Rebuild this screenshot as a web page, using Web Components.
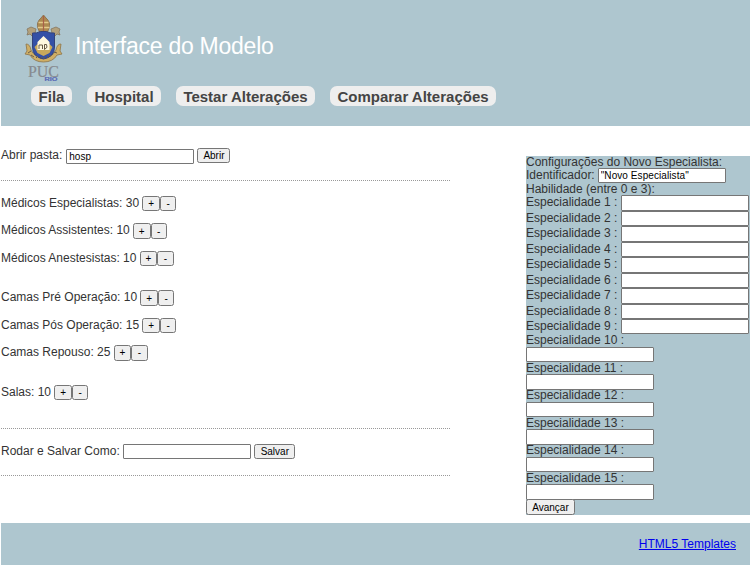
<!DOCTYPE html>
<html lang="pt-BR"><head><meta charset="utf-8"><title>Interface do Modelo</title>
<style>
html,body{margin:0;background:#fff}
body{width:750px;height:567px;overflow:hidden;font:12px/12px "Liberation Sans",Arial,sans-serif;color:#333}
</style></head><body>
<model-app></model-app>
<script>
const define=(name,html)=>customElements.define(name,class extends HTMLElement{
  connectedCallback(){
    if(this.shadowRoot)return;
    const t=document.createElement('template');
    t.innerHTML=typeof html==='function'?html(this):html;
    this.attachShadow({mode:'open'}).append(t.content.cloneNode(true));
    const input=name==='text-field'&&this.shadowRoot.querySelector('input');
    if(input)input.value=this.getAttribute('value')||'';
  }
});

define('text-field',`<style>
:host{display:block;width:128px;height:15.45px;flex:none}
input{display:block;box-sizing:border-box;width:100%;height:100%;margin:0;padding:1px 2px;border:1px solid #767676;border-radius:1px;background:#fff;color:#000;font:10px "Liberation Sans",Arial,sans-serif;letter-spacing:.08px;outline:0}
</style><input type="text">`);

define('push-button',`<style>
:host{display:block;flex:none;height:15.45px}
button{display:block;box-sizing:border-box;width:100%;height:100%;margin:0;padding:0;border:1px solid #767676;border-radius:2.5px;background:#efefef;color:#000;font:10px/13px "Liberation Sans",Arial,sans-serif;text-align:center;white-space:nowrap}
</style><button><slot></slot></button>`);

define('nav-pill',`<style>
:host{display:block;height:20px;border-radius:7px;background:#eee;color:#444;font:bold 15px/21px "Liberation Sans",Arial,sans-serif;text-align:center;white-space:nowrap}
</style><slot></slot>`);

define('puc-logo',`<style>:host{display:block;width:40px;height:70px}svg{display:block}</style>
<svg width="40" height="70" viewBox="0 0 40 70">
 <g fill="none" stroke="#a3916b" stroke-width="2.4"><path d="M7 17 32 42M34 17 9 42"/></g>
 <g fill="#b3a17c" stroke="#857660" stroke-width=".8">
  <path d="m4 14 4-2 5 2-1 4 2 3-4 1-3-3-3 1 1-3zM37 14l-4-2-5 2 1 4-2 3 4 1 3-3 3 1-1-3z"/>
 </g>
 <path d="M15 13.500Q13 7 18 3l2.500-3L23 3q5 4 3 10.500L24.500 17h-8z" fill="#ad8a51" stroke="#876742" stroke-width=".8"/>
 <path d="M15.500 7.500h10M15 12.500h11.500" stroke="#e4c98a" stroke-width="1.500"/><path d="M20.500 1v15" stroke="#a86048" stroke-width="1.200"/>
 <path d="M3 29q4 0 5 6 3 7 12.500 8Q30 42 33 35q1-6 5-6l-1 7 2 3-5 1q-4 7-13.500 7T7 40l-5-1 2-3z" fill="#cfae64" stroke="#927b50" stroke-width=".9"/>
 <path d="M9.500 18q4 .5 8-1.500h6q3 2 8 1.500v14q0 10-11 12-11-2-11-12z" fill="#3450a6" stroke="#344379"/>
 <path d="m11.500 32 4-4 1-3 4-3 4 3 1 3 4 4-3 6-6 3-6-3z" fill="#c9a95b"/>
 <path d="m20.500 21 6 6v8h-12v-8z" fill="#fff8df"/>
 <path d="M16 34v-4h3.500v4m2-4.500v5q4-2 2-5z" fill="none" stroke="#665844" stroke-width="1"/>
 <path d="m5 38 3-2m0 4 3 2m2 1 2-2m2 3 2-2m2 2v-2m4 1-1-2m4 0-2-1m5-3 3 1" stroke="#685c49" stroke-width="1"/>
 <text x="5" y="61.500" font-family="Liberation Serif,serif" font-size="16" fill="#878b90" stroke="#878b90" stroke-width=".2" textLength="31" lengthAdjust="spacingAndGlyphs">PUC</text>
 <text x="21.500" y="66" font-family="Liberation Sans,sans-serif" font-size="4.500" font-weight="bold" fill="#5869b5" stroke="#5869b5" stroke-width=".15" textLength="13" lengthAdjust="spacingAndGlyphs">RIO</text>
</svg>`);

define('app-header',`<style>
:host{display:block;box-sizing:border-box;height:126px;background:#aec6cf;padding:15px 0 0 22px}
.brand{display:flex;height:71px}
h1{margin:16px 0 0 12px;font:23px/30px "Liberation Sans",Arial,sans-serif;letter-spacing:-.25px;color:#fff;white-space:nowrap}
nav{display:flex;gap:15px;padding-left:8px}
</style><div class="brand"><puc-logo></puc-logo><h1>Interface do Modelo</h1></div>
<nav><nav-pill style="width:41px">Fila</nav-pill><nav-pill style="width:74px">Hospital</nav-pill><nav-pill style="width:139px">Testar Alterações</nav-pill><nav-pill style="width:166px">Comparar Alterações</nav-pill></nav>`);

define('count-stepper',`<style>
:host{display:flex;height:15.45px;line-height:14px;white-space:nowrap}
span{margin-right:3.3px}
</style><span><slot></slot></span><push-button style="width:17.500px">+</push-button><push-button style="width:16.500px">-</push-button>`);

define('dotted-rule',`<style>:host{display:block;height:1px;background:repeating-linear-gradient(90deg,#999 0 1px,transparent 1px 2px)}</style>`);

define('hospital-controls',`<style>
:host{display:block;width:450px;padding-top:22px}
.line{display:flex;gap:3.3px;line-height:14px;height:16px}
.group{display:grid;gap:12px}
</style>
<div class="line"><span>Abrir pasta:</span><text-field value="hosp" style="margin:.7px 0 0 .5px"></text-field><push-button style="width:33px">Abrir</push-button></div>
<dotted-rule style="margin-top:16px"></dotted-rule>
<div class="group" style="margin-top:15px"><count-stepper>Médicos Especialistas: 30</count-stepper><count-stepper>Médicos Assistentes: 10</count-stepper><count-stepper>Médicos Anestesistas: 10</count-stepper></div>
<div class="group" style="margin-top:24px"><count-stepper>Camas Pré Operação: 10</count-stepper><count-stepper>Camas Pós Operação: 15</count-stepper><count-stepper>Camas Repouso: 25</count-stepper></div>
<count-stepper style="margin-top:24px">Salas: 10</count-stepper>
<dotted-rule style="margin-top:27.700px"></dotted-rule>
<div class="line" style="margin-top:15px"><span>Rodar e Salvar Como:</span><text-field></text-field><push-button style="width:41px">Salvar</push-button></div>
<dotted-rule style="margin-top:15px"></dotted-rule>`);

define('specialist-form',()=>`<style>
:host{display:block;width:224px;height:359px;background:#aec6cf}
.title{height:12px}
.row{display:flex;gap:3.6px;height:15.45px;line-height:14.5px;white-space:nowrap}
.row.id{gap:3px}
.stack{height:27.500px;line-height:13.5px}.stack div{height:12.2px}
</style><div class="title">Configurações do Novo Especialista:</div>
<div class="row id"><span>Identificador:</span><text-field value='"Novo Especialista"'></text-field></div>
<div class="title">Habilidade (entre 0 e 3):</div>
${Array.from({length:9},(_,i)=>`<div class="row"><span>Especialidade ${i+1} :</span><text-field></text-field></div>`).join('')}
${Array.from({length:6},(_,i)=>`<div class="stack"><div>Especialidade ${i+10} :</div><text-field></text-field></div>`).join('')}
<push-button style="width:49px;margin-top:.1px">Avançar</push-button>`);

define('app-footer',`<style>
:host{display:flex;box-sizing:border-box;height:42px;background:#aec6cf;justify-content:flex-end;padding:14px 14px 0 0;line-height:14px}
a{color:#00e;text-decoration:underline}
</style><a href="#">HTML5 Templates</a>`);

define('model-app',`<style>
:host{display:block;margin-left:1px}
main{display:flex;justify-content:space-between;height:397px}
specialist-form{margin-top:30px}
</style><app-header></app-header><main><hospital-controls></hospital-controls><specialist-form></specialist-form></main><app-footer></app-footer>`);
</script></body></html>
